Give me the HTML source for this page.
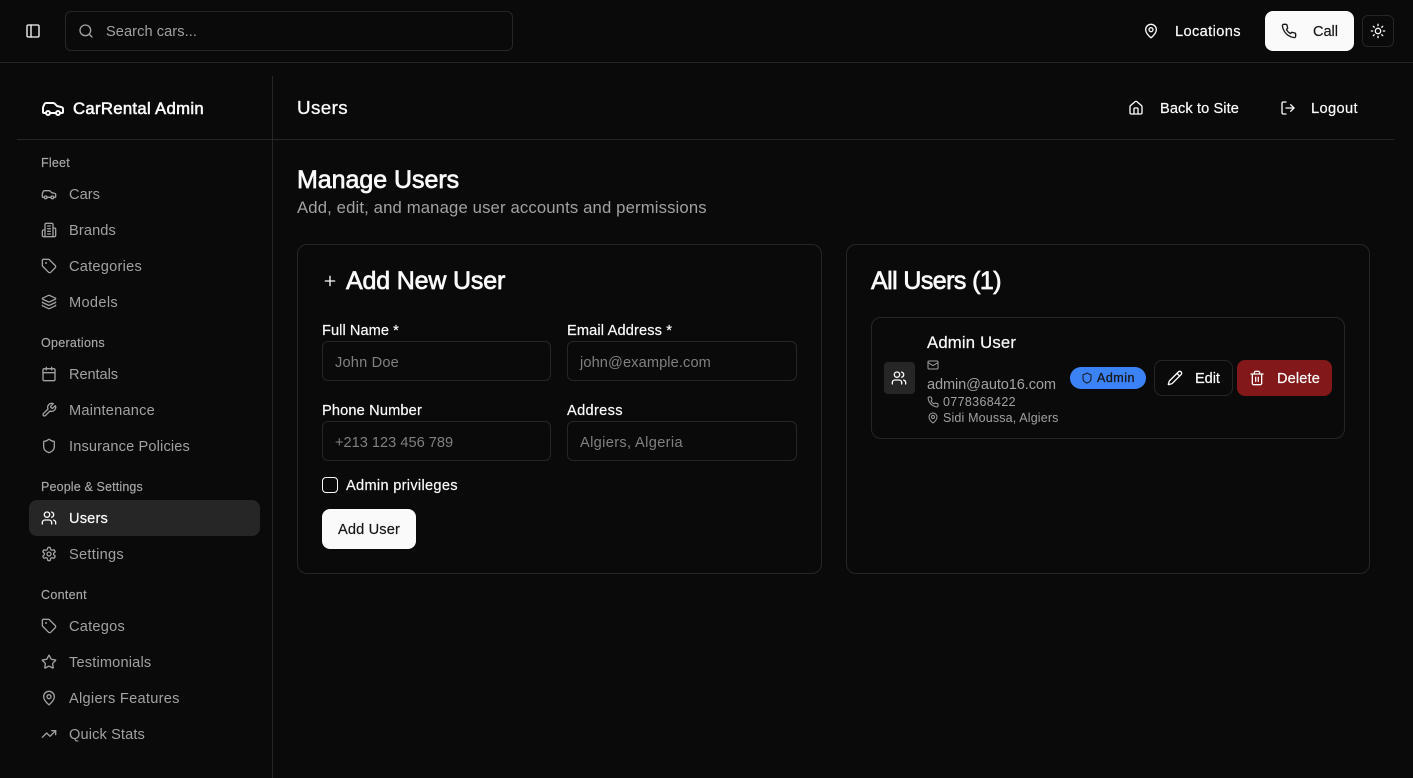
<!DOCTYPE html>
<html lang="en"><head><meta charset="utf-8"><title>Manage Users</title>
<style>
html,body{margin:0;padding:0;width:1413px;height:778px;overflow:hidden;background:#0a0a0a}
body{position:relative;font-family:"Liberation Sans",Arial,sans-serif;color:#fafafa;font-size:14.6px}
.t{position:absolute;white-space:nowrap;line-height:22px;height:22px}
.m{-webkit-text-stroke:.2px currentColor}
.h{font-size:25px;-webkit-text-stroke:.7px currentColor}
.g{color:#a1a1a1}
.l{color:#a8a8a8;font-size:12.5px;-webkit-text-stroke:.15px currentColor}
.p{color:#808080}
.b{position:absolute;box-sizing:border-box;border:1px solid #262626}
.r{position:absolute;background:#262626}
svg.i{position:absolute;width:16px;height:16px;fill:none;stroke:currentColor;stroke-width:2;stroke-linecap:round;stroke-linejoin:round}
svg.s{width:12px;height:12px}
</style></head><body>
<svg width="0" height="0" style="position:absolute">
<symbol id="panel" viewBox="0 0 24 24"><rect x="3" y="3" width="18" height="18" rx="2"/><path d="M9 3v18"/></symbol>
<symbol id="search" viewBox="0 0 24 24"><path d="m21 21-4.34-4.34"/><circle cx="11" cy="11" r="8"/></symbol>
<symbol id="pin" viewBox="0 0 24 24"><path d="M20 10c0 4.993-5.539 10.193-7.399 11.799a1 1 0 0 1-1.202 0C9.539 20.193 4 14.993 4 10a8 8 0 0 1 16 0"/><circle cx="12" cy="10" r="3"/></symbol>
<symbol id="phone" viewBox="0 0 24 24"><path d="M22 16.92v3a2 2 0 0 1-2.18 2 19.79 19.79 0 0 1-8.63-3.07 19.5 19.5 0 0 1-6-6 19.79 19.79 0 0 1-3.07-8.67A2 2 0 0 1 4.11 2h3a2 2 0 0 1 2 1.72 12.84 12.84 0 0 0 .7 2.81 2 2 0 0 1-.45 2.11L8.09 9.91a16 16 0 0 0 6 6l1.27-1.27a2 2 0 0 1 2.11-.45 12.84 12.84 0 0 0 2.81.7A2 2 0 0 1 22 16.92z"/></symbol>
<symbol id="sun" viewBox="0 0 24 24"><circle cx="12" cy="12" r="4"/><path d="M12 2v2M12 20v2M4.93 4.93l1.41 1.41M17.66 17.66l1.41 1.41M2 12h2M20 12h2M6.34 17.66l-1.41 1.41M19.07 4.93l-1.41 1.41"/></symbol>
<symbol id="car" viewBox="0 0 24 24"><path d="M19 17h2c.6 0 1-.4 1-1v-3c0-.9-.7-1.7-1.5-1.9C18.7 10.6 16 10 16 10s-1.3-1.4-2.2-2.3c-.5-.4-1.1-.7-1.8-.7H5c-.6 0-1.1.4-1.4.9l-1.4 2.9A3.7 3.7 0 0 0 2 12v4c0 .6.4 1 1 1h2"/><circle cx="7" cy="17" r="2"/><path d="M9 17h6"/><circle cx="17" cy="17" r="2"/></symbol>
<symbol id="building" viewBox="0 0 24 24"><path d="M6 22V4a2 2 0 0 1 2-2h8a2 2 0 0 1 2 2v18Z"/><path d="M6 12H4a2 2 0 0 0-2 2v6a2 2 0 0 0 2 2h2"/><path d="M18 9h2a2 2 0 0 1 2 2v9a2 2 0 0 1-2 2h-2"/><path d="M10 6h4M10 10h4M10 14h4M10 18h4"/></symbol>
<symbol id="tag" viewBox="0 0 24 24"><path d="M12.586 2.586A2 2 0 0 0 11.172 2H4a2 2 0 0 0-2 2v7.172a2 2 0 0 0 .586 1.414l8.704 8.704a2.426 2.426 0 0 0 3.42 0l6.58-6.58a2.426 2.426 0 0 0 0-3.42z"/><circle cx="7.5" cy="7.5" r=".5" fill="currentColor"/></symbol>
<symbol id="layers" viewBox="0 0 24 24"><path d="M12.83 2.18a2 2 0 0 0-1.66 0L2.6 6.08a1 1 0 0 0 0 1.83l8.58 3.91a2 2 0 0 0 1.66 0l8.58-3.9a1 1 0 0 0 0-1.83z"/><path d="M2 12a1 1 0 0 0 .58.91l8.6 3.91a2 2 0 0 0 1.65 0l8.58-3.9A1 1 0 0 0 22 12"/><path d="M2 17a1 1 0 0 0 .58.91l8.6 3.91a2 2 0 0 0 1.65 0l8.58-3.9A1 1 0 0 0 22 17"/></symbol>
<symbol id="cal" viewBox="0 0 24 24"><path d="M8 2v4M16 2v4"/><rect x="3" y="4" width="18" height="18" rx="2"/><path d="M3 10h18"/></symbol>
<symbol id="wrench" viewBox="0 0 24 24"><path d="M14.7 6.3a1 1 0 0 0 0 1.4l1.6 1.6a1 1 0 0 0 1.4 0l3.77-3.77a6 6 0 0 1-7.94 7.94l-6.91 6.91a2.12 2.12 0 0 1-3-3l6.91-6.91a6 6 0 0 1 7.94-7.94l-3.76 3.76z"/></symbol>
<symbol id="shield" viewBox="0 0 24 24"><path d="M20 13c0 5-3.5 7.5-7.66 8.95a1 1 0 0 1-.67-.01C7.5 20.5 4 18 4 13V6a1 1 0 0 1 1-1c2 0 4.5-1.2 6.24-2.72a1.17 1.17 0 0 1 1.52 0C14.51 3.81 17 5 19 5a1 1 0 0 1 1 1z"/></symbol>
<symbol id="users" viewBox="0 0 24 24"><path d="M16 21v-2a4 4 0 0 0-4-4H6a4 4 0 0 0-4 4v2"/><circle cx="9" cy="7" r="4"/><path d="M22 21v-2a4 4 0 0 0-3-3.87"/><path d="M16 3.13a4 4 0 0 1 0 7.75"/></symbol>
<symbol id="gear" viewBox="0 0 24 24"><path d="M12.22 2h-.44a2 2 0 0 0-2 2v.18a2 2 0 0 1-1 1.73l-.43.25a2 2 0 0 1-2 0l-.15-.08a2 2 0 0 0-2.73.73l-.22.38a2 2 0 0 0 .73 2.73l.15.1a2 2 0 0 1 1 1.72v.51a2 2 0 0 1-1 1.74l-.15.09a2 2 0 0 0-.73 2.73l.22.38a2 2 0 0 0 2.73.73l.15-.08a2 2 0 0 1 2 0l.43.25a2 2 0 0 1 1 1.73V20a2 2 0 0 0 2 2h.44a2 2 0 0 0 2-2v-.18a2 2 0 0 1 1-1.73l.43-.25a2 2 0 0 1 2 0l.15.08a2 2 0 0 0 2.73-.73l.22-.39a2 2 0 0 0-.73-2.73l-.15-.08a2 2 0 0 1-1-1.74v-.5a2 2 0 0 1 1-1.74l.15-.09a2 2 0 0 0 .73-2.73l-.22-.38a2 2 0 0 0-2.73-.73l-.15.08a2 2 0 0 1-2 0l-.43-.25a2 2 0 0 1-1-1.73V4a2 2 0 0 0-2-2z"/><circle cx="12" cy="12" r="3"/></symbol>
<symbol id="star" viewBox="0 0 24 24"><path d="M11.525 2.295a.53.53 0 0 1 .95 0l2.31 4.679a2.123 2.123 0 0 0 1.595 1.16l5.166.756a.53.53 0 0 1 .294.904l-3.736 3.638a2.123 2.123 0 0 0-.611 1.878l.882 5.14a.53.53 0 0 1-.771.56l-4.618-2.428a2.122 2.122 0 0 0-1.973 0L6.396 21.01a.53.53 0 0 1-.77-.56l.881-5.139a2.122 2.122 0 0 0-.611-1.879L2.16 9.795a.53.53 0 0 1 .294-.906l5.165-.755a2.122 2.122 0 0 0 1.597-1.16z"/></symbol>
<symbol id="trend" viewBox="0 0 24 24"><path d="M16 7h6v6"/><path d="m22 7-8.5 8.5-5-5L2 17"/></symbol>
<symbol id="house" viewBox="0 0 24 24"><path d="M15 21v-8a1 1 0 0 0-1-1h-4a1 1 0 0 0-1 1v8"/><path d="M3 10a2 2 0 0 1 .709-1.528l7-5.999a2 2 0 0 1 2.582 0l7 5.999A2 2 0 0 1 21 10v9a2 2 0 0 1-2 2H5a2 2 0 0 1-2-2z"/></symbol>
<symbol id="logout" viewBox="0 0 24 24"><path d="M9 21H5a2 2 0 0 1-2-2V5a2 2 0 0 1 2-2h4"/><path d="M16 17l5-5-5-5"/><path d="M21 12H9"/></symbol>
<symbol id="plus" viewBox="0 0 24 24"><path d="M5 12h14M12 5v14"/></symbol>
<symbol id="mail" viewBox="0 0 24 24"><rect x="2" y="4" width="20" height="16" rx="2"/><path d="m22 7-8.97 5.7a1.94 1.94 0 0 1-2.06 0L2 7"/></symbol>
<symbol id="pencil" viewBox="0 0 24 24"><path d="M21.174 6.812a1 1 0 0 0-3.986-3.987L3.842 16.174a2 2 0 0 0-.5.83l-1.321 4.352a.5.5 0 0 0 .623.622l4.353-1.32a2 2 0 0 0 .83-.497z"/><path d="m15 5 4 4"/></symbol>
<symbol id="trash" viewBox="0 0 24 24"><path d="M3 6h18"/><path d="M19 6v14c0 1-1 2-2 2H7c-1 0-2-1-2-2V6"/><path d="M8 6V4c0-1 1-2 2-2h4c1 0 2 1 2 2v2"/><path d="M10 11v6M14 11v6"/></symbol>
</svg>

<!-- Top bar -->
<div class="r" style="left:0;top:62px;width:1413px;height:1px"></div>
<svg class="i" style="left:25px;top:23px;color:#fafafa"><use href="#panel"/></svg>
<div class="b" style="left:65px;top:11px;width:448px;height:40px;border-radius:6px"></div>
<svg class="i g" style="left:78px;top:23px"><use href="#search"/></svg>
<span class="t g" style="left:106px;top:21px;letter-spacing:.065px">Search cars...</span>
<svg class="i" style="left:1143px;top:23px"><use href="#pin"/></svg>
<span class="t m" style="left:1175px;top:21px;letter-spacing:.38px">Locations</span>
<div style="position:absolute;left:1265px;top:11px;width:89px;height:40px;background:#fafafa;border-radius:8px"></div>
<svg class="i" style="left:1281px;top:23px;color:#171717"><use href="#phone"/></svg>
<span class="t m" style="left:1313px;top:21px;letter-spacing:-.06px;color:#171717">Call</span>
<div class="b" style="left:1362px;top:15px;width:32px;height:32px;border-radius:6px"></div>
<svg class="i" style="left:1370px;top:23px"><use href="#sun"/></svg>

<!-- Dividers -->
<div class="r" style="left:272px;top:76px;width:1px;height:702px"></div>
<div class="r" style="left:17px;top:139px;width:1377px;height:1px"></div>

<!-- Brand -->
<svg class="i" style="left:41px;top:96px;width:24px;height:24px"><use href="#car"/></svg>
<span class="t" style="left:73px;top:98px;font-size:16.7px;letter-spacing:.32px;-webkit-text-stroke:.55px currentColor">CarRental Admin</span>

<!-- Sidebar -->
<span class="t l" style="left:41px;top:152px;letter-spacing:.23px">Fleet</span>
<svg class="i g" style="left:41px;top:186px"><use href="#car"/></svg>
<span class="t g" style="left:69px;top:184px;letter-spacing:.04px">Cars</span>
<svg class="i g" style="left:41px;top:222px"><use href="#building"/></svg>
<span class="t g" style="left:69px;top:220px;letter-spacing:.12px">Brands</span>
<svg class="i g" style="left:41px;top:258px"><use href="#tag"/></svg>
<span class="t g" style="left:69px;top:256px;letter-spacing:.24px">Categories</span>
<svg class="i g" style="left:41px;top:294px"><use href="#layers"/></svg>
<span class="t g" style="left:69px;top:292px;letter-spacing:.33px">Models</span>

<span class="t l" style="left:41px;top:332px;letter-spacing:.28px">Operations</span>
<svg class="i g" style="left:41px;top:366px"><use href="#cal"/></svg>
<span class="t g" style="left:69px;top:364px;letter-spacing:-.07px">Rentals</span>
<svg class="i g" style="left:41px;top:402px"><use href="#wrench"/></svg>
<span class="t g" style="left:69px;top:400px;letter-spacing:.22px">Maintenance</span>
<svg class="i g" style="left:41px;top:438px"><use href="#shield"/></svg>
<span class="t g" style="left:69px;top:436px;letter-spacing:.14px">Insurance Policies</span>

<span class="t l" style="left:41px;top:476px;letter-spacing:.15px">People &amp; Settings</span>
<div style="position:absolute;left:29px;top:500px;width:231px;height:36px;background:#262626;border-radius:8px"></div>
<svg class="i" style="left:41px;top:510px"><use href="#users"/></svg>
<span class="t m" style="left:69px;top:508px;letter-spacing:.17px">Users</span>
<svg class="i g" style="left:41px;top:546px"><use href="#gear"/></svg>
<span class="t g" style="left:69px;top:544px;letter-spacing:.28px">Settings</span>

<span class="t l" style="left:41px;top:584px;letter-spacing:.31px">Content</span>
<svg class="i g" style="left:41px;top:618px"><use href="#tag"/></svg>
<span class="t g" style="left:69px;top:616px;letter-spacing:.23px">Categos</span>
<svg class="i g" style="left:41px;top:654px"><use href="#star"/></svg>
<span class="t g" style="left:69px;top:652px;letter-spacing:.17px">Testimonials</span>
<svg class="i g" style="left:41px;top:690px"><use href="#pin"/></svg>
<span class="t g" style="left:69px;top:688px;letter-spacing:.28px">Algiers Features</span>
<svg class="i g" style="left:41px;top:726px"><use href="#trend"/></svg>
<span class="t g" style="left:69px;top:724px;letter-spacing:.12px">Quick Stats</span>

<!-- Page header -->
<span class="t m" style="left:297px;top:97px;font-size:18.8px;letter-spacing:.4px;-webkit-text-stroke:.3px currentColor">Users</span>
<svg class="i" style="left:1128px;top:100px"><use href="#house"/></svg>
<span class="t m" style="left:1160px;top:98px;letter-spacing:.09px">Back to Site</span>
<svg class="i" style="left:1280px;top:100px"><use href="#logout"/></svg>
<span class="t m" style="left:1311px;top:98px;letter-spacing:.39px">Logout</span>

<span class="t h" style="left:297px;top:169px;letter-spacing:-.04px">Manage Users</span>
<span class="t g" style="left:297px;top:197px;font-size:16.7px;letter-spacing:.14px">Add, edit, and manage user accounts and permissions</span>

<!-- Add user card -->
<div class="b" style="left:297px;top:244px;width:525px;height:330px;border-radius:10px"></div>
<svg class="i" style="left:322px;top:273px"><use href="#plus"/></svg>
<span class="t h" style="left:346px;top:270px;letter-spacing:-.17px">Add New User</span>

<span class="t m" style="left:322px;top:320px;letter-spacing:.06px">Full Name *</span>
<div class="b" style="left:322px;top:341px;width:229px;height:40px;border-radius:6px"></div>
<span class="t p" style="left:335px;top:352px;letter-spacing:.18px">John Doe</span>
<span class="t m" style="left:567px;top:320px;letter-spacing:.14px">Email Address *</span>
<div class="b" style="left:567px;top:341px;width:230px;height:40px;border-radius:6px"></div>
<span class="t p" style="left:580px;top:352px;letter-spacing:.11px">john@example.com</span>
<span class="t m" style="left:322px;top:400px;letter-spacing:.15px">Phone Number</span>
<div class="b" style="left:322px;top:421px;width:229px;height:40px;border-radius:6px"></div>
<span class="t p" style="left:335px;top:432px;letter-spacing:0">+213 123 456 789</span>
<span class="t m" style="left:567px;top:400px;letter-spacing:.34px">Address</span>
<div class="b" style="left:567px;top:421px;width:230px;height:40px;border-radius:6px"></div>
<span class="t p" style="left:580px;top:432px;letter-spacing:.35px">Algiers, Algeria</span>

<div class="b" style="left:322px;top:477px;width:16px;height:16px;border-radius:4px;border-color:#fafafa"></div>
<span class="t m" style="left:346px;top:475px;letter-spacing:.3px">Admin privileges</span>
<div style="position:absolute;left:322px;top:509px;width:94px;height:40px;background:#fafafa;border-radius:8px"></div>
<span class="t m" style="left:338px;top:519px;letter-spacing:.14px;color:#171717">Add User</span>

<!-- All users card -->
<div class="b" style="left:846px;top:244px;width:524px;height:330px;border-radius:10px"></div>
<span class="t h" style="left:871px;top:270px;letter-spacing:-.58px">All Users (1)</span>
<div class="b" style="left:871px;top:317px;width:474px;height:122px;border-radius:10px"></div>
<div style="position:absolute;left:884px;top:362px;width:31px;height:32px;background:#262626;border-radius:4px"></div>
<svg class="i" style="left:891px;top:370px"><use href="#users"/></svg>
<span class="t m" style="left:927px;top:332px;font-size:16.7px;letter-spacing:.19px">Admin User</span>
<svg class="i s g" style="left:927px;top:359px"><use href="#mail"/></svg>
<span class="t g" style="left:927px;top:374px;letter-spacing:-.12px">admin@auto16.com</span>
<svg class="i s g" style="left:927px;top:396px"><use href="#phone"/></svg>
<span class="t g" style="left:943px;top:391px;font-size:12.5px;letter-spacing:.34px">0778368422</span>
<svg class="i s g" style="left:927px;top:412px"><use href="#pin"/></svg>
<span class="t g" style="left:943px;top:407px;font-size:12.5px;letter-spacing:.15px">Sidi Moussa, Algiers</span>

<div style="position:absolute;left:1070px;top:367px;width:76px;height:22px;background:#3b82f6;border-radius:11px"></div>
<svg class="i s" style="left:1081px;top:372px;color:#171717"><use href="#shield"/></svg>
<span class="t" style="left:1097px;top:367px;font-size:12.5px;letter-spacing:.5px;color:#171717;-webkit-text-stroke:.3px #171717">Admin</span>

<div class="b" style="left:1154px;top:360px;width:79px;height:36px;border-radius:8px"></div>
<svg class="i" style="left:1167px;top:370px"><use href="#pencil"/></svg>
<span class="t m" style="left:1195px;top:368px;letter-spacing:-.06px">Edit</span>
<div style="position:absolute;left:1237px;top:360px;width:95px;height:36px;background:#82181a;border-radius:8px"></div>
<svg class="i" style="left:1249px;top:370px"><use href="#trash"/></svg>
<span class="t m" style="left:1277px;top:368px;letter-spacing:.13px">Delete</span>
</body></html>
